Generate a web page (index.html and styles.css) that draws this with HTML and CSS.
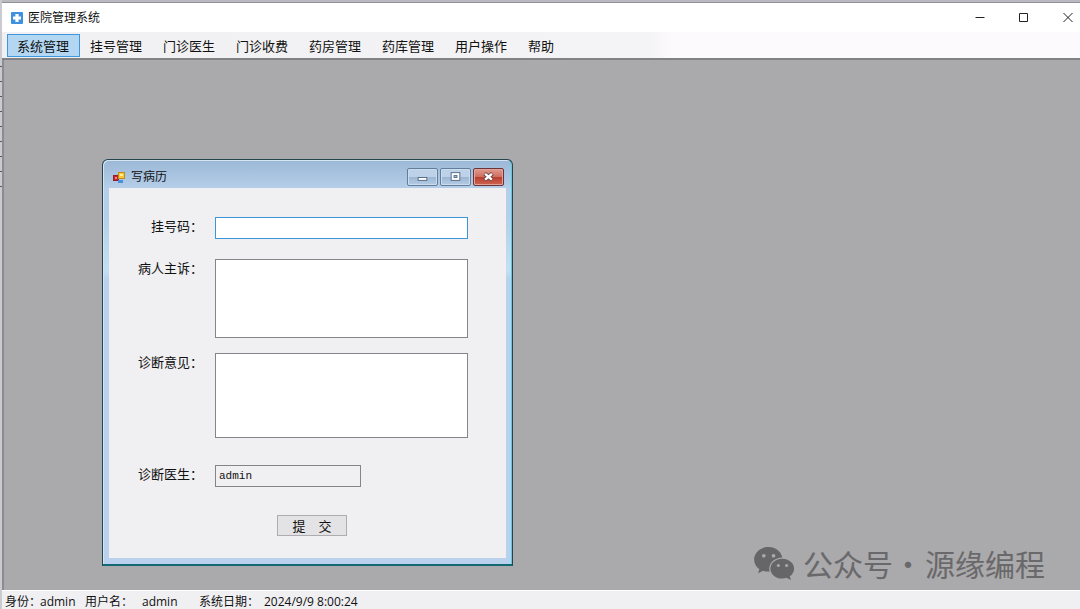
FILE: index.html
```html
<!DOCTYPE html>
<html lang="zh-CN">
<head>
<meta charset="utf-8">
<meta name="viewport" content="width=device-width, initial-scale=1">
<title>医院管理系统</title>
<link rel="stylesheet" href="styles.css">
</head>
<body>
<div class="app">
  <header class="titlebar">
    <svg class="app-icon" viewBox="0 0 12 12" aria-hidden="true"><rect width="12" height="12" rx="1" fill="#3c92df"/><path d="M4.400 2h3.200v2.400H10v3.200H7.600V10H4.400V7.600H2V4.400h2.400z" fill="#fff"/></svg>
    <h1 class="app-title">医院管理系统</h1>
    <div class="window-controls">
      <button class="window-button" type="button" aria-label="最小化"><svg viewBox="0 0 12 12" aria-hidden="true"><path d="M1.500 5.500h9" /></svg></button>
      <button class="window-button" type="button" aria-label="最大化"><svg viewBox="0 0 12 12" aria-hidden="true"><path d="M1.500 1.500h8v8h-8z"/></svg></button>
      <button class="window-button" type="button" aria-label="关闭"><svg viewBox="0 0 12 12" aria-hidden="true"><path d="M1.500 1l9 9m0-9l-9 9"/></svg></button>
    </div>
  </header>
  <nav class="menubar">
    <button class="menu-item menu-item-active" type="button">系统管理</button>
    <button class="menu-item" type="button">挂号管理</button>
    <button class="menu-item" type="button">门诊医生</button>
    <button class="menu-item" type="button">门诊收费</button>
    <button class="menu-item" type="button">药房管理</button>
    <button class="menu-item" type="button">药库管理</button>
    <button class="menu-item" type="button">用户操作</button>
    <button class="menu-item" type="button">帮助</button>
  </nav>
  <main class="workspace">
    <section class="dialog" aria-labelledby="dialog-title">
      <header class="dialog-header">
        <svg class="dialog-icon" viewBox="0 0 13 13" aria-hidden="true"><rect x=".5" y="4.500" width="5" height="5" fill="#c8262c" stroke="#8f2026"/><path d="M2 7h2M3 6v2" stroke="#f5b0a8"/><rect x="5.500" y="1.500" width="6" height="6" fill="#f6c833" stroke="#c58a1c"/><path d="M7 3h3v2H7z" fill="#fff0a0"/><rect x="5" y="9" width="5" height="3" fill="#4d8fd8"/></svg>
        <h2 class="dialog-title" id="dialog-title">写病历</h2>
        <div class="dialog-controls">
          <button class="dialog-button" type="button" aria-label="最小化"><svg viewBox="0 0 30 16" aria-hidden="true"><rect x="10.500" y="8.500" width="9" height="3" fill="#fff" stroke="#586c85"/></svg></button>
          <button class="dialog-button" type="button" aria-label="最大化"><svg viewBox="0 0 30 16" aria-hidden="true"><rect x="10.500" y="3.500" width="9" height="8" fill="#fff" stroke="#586c85"/><rect x="13.500" y="6.500" width="3" height="2" fill="#a9c1dc" stroke="#586c85"/></svg></button>
          <button class="dialog-button dialog-button-close" type="button" aria-label="关闭"><svg viewBox="0 0 30 16" aria-hidden="true"><path d="M11 4.500l8 6.500m0-6.500l-8 6.500" stroke="#6d4448" stroke-width="4.200"/><path d="M11.500 4.700l7 6.100m0-6.100l-7 6.100" stroke="#fff" stroke-width="2.400"/></svg></button>
        </div>
      </header>
      <form class="record-form">
        <label class="field-label" for="code">挂号码：</label>
        <input class="field field-focused" id="code" type="text">
        <label class="field-label" for="complaint">病人主诉：</label>
        <textarea class="field field-area" id="complaint"></textarea>
        <label class="field-label" for="opinion">诊断意见：</label>
        <textarea class="field field-area field-area-tall" id="opinion"></textarea>
        <label class="field-label" for="doctor">诊断医生：</label>
        <input class="field field-readonly" id="doctor" type="text" value="admin" readonly>
        <button class="submit-button" type="button">提　交</button>
      </form>
    </section>
    <div class="watermark">
      <svg class="watermark-icon" viewBox="0 0 42 34" aria-hidden="true">
        <path fill="#666567" d="M15 0C6.500 0 0 5.800 0 13c0 4 2 7.500 5.400 9.900L4 27l5.200-2.600c2.100.7 4.300 1 6.800.9a11 11 0 0 1-.4-2.800C15.600 15.800 21.500 11 29 10.800 27.800 4.500 22 0 15 0z"/>
        <path fill="#666567" d="M29 12c-6.800 0-12.200 4.500-12.200 10.300S22.200 32.500 29 32.500c1.500 0 3-.2 4.300-.7L38 34l-1.300-3.800c2.700-1.900 4.500-4.700 4.500-7.900C41.200 16.500 35.800 12 29 12z"/>
        <g fill="#aaa9ab"><circle cx="10" cy="9" r="1.900"/><circle cx="20" cy="9" r="1.900"/><circle cx="25" cy="19" r="1.600"/><circle cx="33.500" cy="19" r="1.600"/></g>
      </svg>
      <span>公众号</span><span class="watermark-dot">·</span><span>源缘编程</span>
    </div>
  </main>
  <footer class="statusbar">
    <span class="status-role">身份：</span><span class="status-value">admin</span>
    <span class="status-user">用户名：</span><span class="status-value">admin</span>
    <span class="status-date">系统日期：</span><span>2024/9/9 8:00:24</span>
  </footer>
</div>
</body>
</html>
```

FILE: styles.css
```css
* { box-sizing: border-box; }

body {
  margin: 0;
  background: #b9b9c0;
  color: #111;
  font: 12px/16px "Open Sans", "Noto Sans CJK SC", sans-serif;
}

button, input, textarea { font: inherit; color: inherit; }

.app {
  display: flex;
  flex-direction: column;
  height: 100vh;
  padding: 2px 0 0 2px;
  background:
    repeating-linear-gradient(#c9cbd0 0 6px, #55585f 6px 7px, #c9cbd0 7px 15px) 0 60px / 2px 130px no-repeat,
    linear-gradient(90deg, #c9cbd0 2px, #b9b9c0 2px);
  overflow: hidden;
}

.titlebar {
  display: flex;
  align-items: center;
  flex: none;
  height: 30px;
  padding-left: 9px;
  border-top: 1px solid #929296;
  background: #fff;
}

.app-icon { width: 12px; height: 12px; margin-right: 5px; }

.app-title { margin: 0; font-size: 12px; font-weight: 400; }

.window-controls { display: flex; gap: 20px; margin-left: auto; }

.window-button {
  width: 24px;
  height: 28px;
  padding: 0;
  border: 0;
  background: none;
}

.window-button svg {
  display: block;
  width: 12px;
  height: 12px;
  margin: auto;
  fill: none;
  stroke: #222;
}

.menubar {
  display: flex;
  flex: none;
  height: 28px;
  padding: 2px 5px;
  border-bottom: 2px solid #828285;
  background: linear-gradient(90deg, #f0f0f2, #f4f3f5 60%, #fcfafc 62%);
}

.menu-item {
  height: 23px;
  padding: 0 11px 0 10px;
  border: 0;
  background: none;
  font-size: 13px;
  line-height: 22px;
}

.menu-item-active { background: #b3d7f3; box-shadow: inset 0 0 0 1px #3d97da; }

.workspace {
  position: relative;
  flex: 1;
  min-height: 0;
  border-left: 2px solid #8b8c8f;
  background: #aaa9ab;
}

.dialog {
  position: absolute;
  top: 99px;
  left: 98px;
  width: 411px;
  padding: 0 6px 6px;
  border: 1px solid #24464f;
  border-bottom: 2px solid #146873;
  border-radius: 6px 6px 0 0;
  background: linear-gradient(#9bb8d6, #b5cee9 28px, #b5cee9 55px, #c4dff2 110px, #b9d1ed 120px);
  box-shadow: inset 1px 1px #d5e4f2, inset -1px 0 #59cce0;
}

.dialog-header { display: flex; align-items: center; height: 28px; padding: 6px 2px 0 4px; }

.dialog-icon { width: 13px; height: 13px; margin-right: 5px; }

.dialog-title { margin: 0; font-size: 12px; font-weight: 400; }

.dialog-controls { display: flex; gap: 2px; margin-left: auto; }

.dialog-button {
  width: 31px;
  height: 18px;
  padding: 0;
  border: 1px solid #637e9c;
  border-radius: 2px;
  background: linear-gradient(#bdd2e8 48%, #9cb6d2 50%, #b4cce5);
  box-shadow: inset 0 0 0 1px #cbdced;
}

.dialog-button svg { display: block; width: 29px; height: 16px; fill: none; }

.dialog-button-close {
  border-color: #6c3439;
  background: linear-gradient(#df9a8e, #ce6f61 48%, #b93d2e 50%, #ce6551);
  box-shadow: inset 0 0 0 1px #e0a398;
}

.record-form {
  display: grid;
  grid-template-columns: 65px 1fr;
  grid-template-rows: 42px 94px 112px 50px auto;
  align-items: start;
  column-gap: 12px;
  padding: 29px 38px 22px 29px;
  background: #f0eff1;
}

.field-label { font-size: 13px; line-height: 18px; text-align: right; white-space: nowrap; }

.field {
  width: 100%;
  height: 22px;
  margin: 0;
  padding: 0 3px;
  border: 1px solid #858488;
  border-radius: 0;
  outline: 0;
  background: #fff;
  font: 11px/18px "Liberation Mono", "Noto Sans CJK SC", monospace;
}

.field-focused { border-color: #3c97d8; }

.field-area { height: 79px; resize: none; }

.field-area-tall { height: 85px; }

.field-readonly { width: 146px; background: #f0eff1; }

.submit-button {
  grid-column: 2;
  justify-self: start;
  width: 70px;
  height: 21px;
  margin-left: 62px;
  padding: 0;
  border: 1px solid #adacb0;
  background: #e3e2e4;
  font-size: 13px;
  line-height: 18px;
}

.watermark {
  position: absolute;
  right: 35px;
  bottom: 5px;
  display: flex;
  align-items: center;
  color: #69686a;
  font: 30px/44px "Noto Sans CJK SC", sans-serif;
}

.watermark-icon { width: 41px; height: 33px; margin-right: 8px; }

.watermark-dot { width: 32px; padding-right: 4px; text-align: center; }

.statusbar {
  display: flex;
  flex: none;
  height: 19px;
  padding: 4px 3px 0;
  border-top: 1px solid #fff;
  background: #f0eff2;
  line-height: 14px;
  white-space: nowrap;
}

.status-role { width: 35px; }
.status-user { width: 57px; margin-left: 10px; }
.status-date { width: 65px; margin-left: 22px; }
.status-value { width: 35px; }
```
